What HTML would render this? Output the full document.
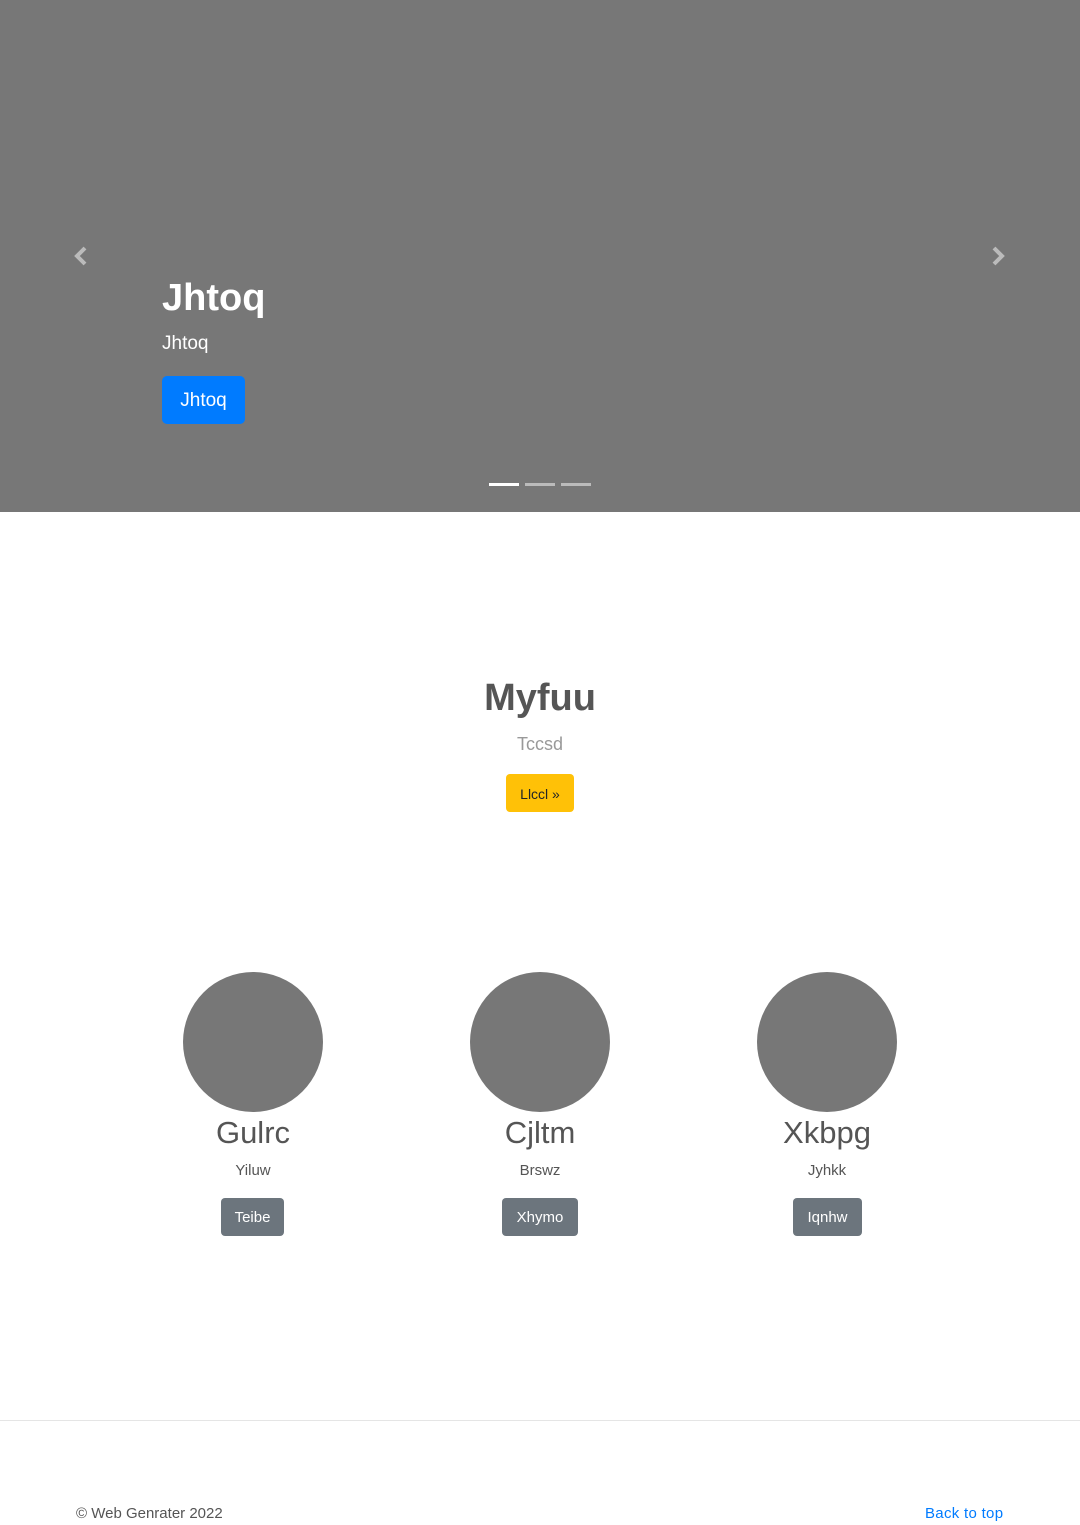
<!DOCTYPE html>
<html><head><style>
*{margin:0;padding:0;box-sizing:border-box}
body{width:1080px;height:1525px;font-family:"Liberation Sans",sans-serif;color:#212529;background:#fff;position:relative;overflow:hidden}
.hero{position:absolute;left:0;top:0;width:1080px;height:512px;background:#777}
.abs{position:absolute}
.btn{position:absolute;border-radius:4px;text-align:center;font-size:15px}
.circ{position:absolute;width:140px;height:140px;border-radius:50%;background:#777;top:972px}
.name{position:absolute;width:200px;text-align:center;font-size:31px;color:#555;top:1115px}
.sub{position:absolute;width:200px;text-align:center;font-size:15px;color:#555;top:1162px}
.gb{background:#6c757d;color:#fff;height:38px;line-height:40px;top:1198px}
</style></head><body>
<div class="hero">
<svg class="abs" style="left:73px;top:246px" width="16" height="20" viewBox="0 0 16 20"><path d="M12 2 L4 10 L12 18" stroke="#bbb" stroke-width="4" fill="none"/></svg>
<svg class="abs" style="left:990px;top:246px" width="16" height="20" viewBox="0 0 16 20"><path d="M4 2 L12 10 L4 18" stroke="#bbb" stroke-width="4" fill="none"/></svg>
<div class="abs" style="left:162px;top:277px;font-size:38px;font-weight:bold;color:#fff">Jhtoq</div>
<div class="abs" style="left:162px;top:333px;font-size:19px;color:#fff">Jhtoq</div>
<div class="btn" style="left:162px;top:376px;width:83px;height:48px;line-height:50px;background:#007bff;color:#fff;font-size:19px;border-radius:5px">Jhtoq</div>
<div class="abs" style="left:489px;top:483px;width:30px;height:3px;background:#fff"></div>
<div class="abs" style="left:525px;top:483px;width:30px;height:3px;background:#bbb"></div>
<div class="abs" style="left:561px;top:483px;width:30px;height:3px;background:#bbb"></div>
</div>
<div class="abs" style="left:0;width:1080px;top:677px;text-align:center;font-size:38px;font-weight:bold;color:#555">Myfuu</div>
<div class="abs" style="left:0;width:1080px;top:734px;text-align:center;font-size:18px;color:#999">Tccsd</div>
<div class="btn" style="left:506px;top:774px;width:68px;height:38px;line-height:40px;background:#ffc107;color:#212529;font-size:14px">Llccl »</div>
<div class="circ" style="left:183px"></div><div class="circ" style="left:470px"></div><div class="circ" style="left:757px"></div>
<div class="name" style="left:153px">Gulrc</div><div class="name" style="left:440px">Cjltm</div><div class="name" style="left:727px">Xkbpg</div>
<div class="sub" style="left:153px">Yiluw</div><div class="sub" style="left:440px">Brswz</div><div class="sub" style="left:727px">Jyhkk</div>
<div class="btn gb" style="left:221px;width:63px">Teibe</div>
<div class="btn gb" style="left:502px;width:76px">Xhymo</div>
<div class="btn gb" style="left:793px;width:69px">Iqnhw</div>
<div class="abs" style="left:0;top:1420px;width:1080px;height:1px;background:#e5e5e5"></div>
<div class="abs" style="left:76px;top:1505px;font-size:15px;color:#555">© Web Genrater 2022</div>
<div class="abs" style="left:925px;top:1505px;font-size:15px;color:#007bff;letter-spacing:0.3px">Back to top</div>
</body></html>
